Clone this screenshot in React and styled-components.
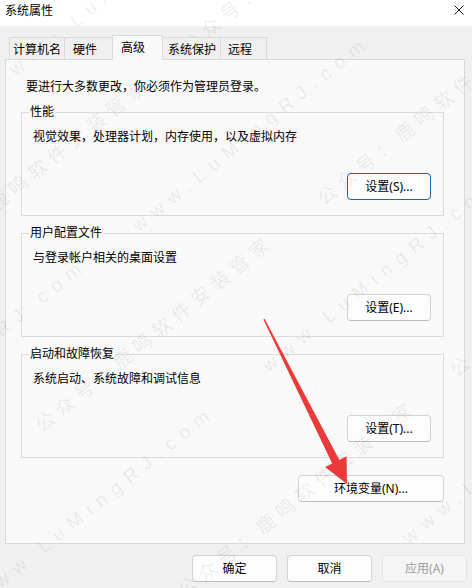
import styled, { createGlobalStyle } from "styled-components";

const GlobalStyle = createGlobalStyle`
  html, body {
    margin: 0;
    padding: 0;
  }
  body {
    background: #f0f0f0;
    font-family: "Noto Sans", "Noto Sans CJK SC", sans-serif;
    font-size: 12px;
    color: #000;
  }
`;

const tabs = [
  { label: "计算机名", width: 56, pad: 3 },
  { label: "硬件", width: 49, pad: 8 },
  { label: "高级", width: 51, pad: 8, active: true },
  { label: "系统保护", width: 59, pad: 5 },
  { label: "远程", width: 47, pad: 7 },
];

const groups = [
  { title: "性能", desc: "视觉效果，处理器计划，内存使用，以及虚拟内存", button: "设置(S)...", focused: true },
  { title: "用户配置文件", desc: "与登录帐户相关的桌面设置", button: "设置(E)..." },
  { title: "启动和故障恢复", desc: "系统启动、系统故障和调试信息", button: "设置(T)..." },
];

const marks = [
  { text: "www.LuMingRJ.com", x: 12, y: 72, latin: true },
  { text: "公众号：鹿鸣软件安装管家", x: 183, y: 48 },
  { text: "公众号：鹿鸣软件安装管家", x: -87, y: 269 },
  { text: "www.LuMingRJ.com", x: 135, y: 228, latin: true },
  { text: "公众号：鹿鸣软件安装管家", x: 319, y: 200 },
  { text: "www.LuMingRJ.com", x: -148, y: 451, latin: true },
  { text: "公众号：鹿鸣软件安装管家", x: 37, y: 427 },
  { text: "www.LuMingRJ.com", x: 265, y: 368, latin: true },
  { text: "公众号：鹿鸣软件安装管家", x: 452, y: 372 },
  { text: "www.LuMingRJ.com", x: -20, y: 598, latin: true },
  { text: "公众号：鹿鸣软件安装管家", x: 180, y: 592 },
  { text: "www.LuMingRJ.com", x: 405, y: 540, latin: true },
];

export default function App() {
  return (
    <>
      <GlobalStyle />
      <Window>
        <TitleBar>
          <Title>系统属性</Title>
          <CloseIcon width="10" height="10" viewBox="0 0 10 10">
            <path d="M0.5 0.5 L9.5 9.5 M9.5 0.5 L0.5 9.5" stroke="#1a1a1a" strokeWidth="1" />
          </CloseIcon>
        </TitleBar>

        <Body>
          <TabRow>
            {tabs.map((t) => (
              <Tab key={t.label} $width={t.width} $pad={t.pad} $active={t.active}>
                {t.label}
              </Tab>
            ))}
          </TabRow>

          <Panel>
            <Intro>要进行大多数更改，你必须作为管理员登录。</Intro>
            {groups.map((g) => (
              <Group key={g.title}>
                <Legend>{g.title}</Legend>
                <Desc>{g.desc}</Desc>
                <GroupButton $focused={g.focused}>{g.button}</GroupButton>
              </Group>
            ))}
            <EnvButton>环境变量(N)...</EnvButton>
          </Panel>

          <Footer>
            <Button>确定</Button>
            <Button>取消</Button>
            <Button disabled>应用(A)</Button>
          </Footer>
        </Body>

        <Watermark>
          {marks.map((m, i) => (
            <Mark key={i} $latin={m.latin} style={{ left: m.x, top: m.y }}>
              {m.text}
            </Mark>
          ))}
        </Watermark>

        <Arrow width="472" height="588" viewBox="0 0 472 588">
          <path
            d="M263.4 319.4 L332.2 463.5 L325.1 467.1 L347 484 L346.5 456.3 L339.4 459.9 L264.6 318.8 Z"
            fill="#ec3a3a"
          />
        </Arrow>
      </Window>
    </>
  );
}

const Window = styled.div`
  position: relative;
  width: 472px;
  height: 588px;
  overflow: hidden;
  background: #f0f0f0;
  display: flex;
  flex-direction: column;
`;

const TitleBar = styled.div`
  height: 26px;
  box-sizing: border-box;
  background: #ffffff;
  display: flex;
  align-items: flex-start;
  justify-content: space-between;
  padding: 3px 8px 0 5px;
`;

const Title = styled.div`
  line-height: 16px;
`;

const CloseIcon = styled.svg`
  margin-top: 2px;
  display: block;
`;

const Body = styled.div`
  padding-top: 9px;
  display: flex;
  flex-direction: column;
`;

const TabRow = styled.div`
  display: flex;
  align-items: flex-end;
  height: 24px;
  padding-left: 9px;
`;

const Tab = styled.div`
  position: relative;
  z-index: ${({ $active }) => ($active ? 2 : 1)};
  box-sizing: border-box;
  width: ${({ $width }) => $width}px;
  height: ${({ $active }) => ($active ? 25 : 22)}px;
  margin-bottom: ${({ $active }) => ($active ? -1 : 0)}px;
  padding-left: ${({ $pad }) => $pad}px;
  padding-top: ${({ $active }) => ($active ? 0 : 2)}px;
  display: flex;
  align-items: center;
  line-height: 16px;
  white-space: nowrap;
  background: ${({ $active }) => ($active ? "#f9f9f9" : "#f0f0f0")};
  border: 1px solid #d9d9d9;
  border-bottom: none;

  & + & {
    margin-left: -1px;
  }
`;

const Panel = styled.div`
  box-sizing: border-box;
  margin-left: 5px;
  width: 460px;
  height: 485px;
  padding: 19px 20px 0 15px;
  background: #f9f9f9;
  border: 1px solid #d9d9d9;
  display: flex;
  flex-direction: column;
  align-items: flex-start;
`;

const Intro = styled.div`
  margin-left: 5px;
  line-height: 16px;
`;

const Group = styled.div`
  position: relative;
  box-sizing: border-box;
  width: 423px;
  margin-top: 17px;
  padding: 16px 12px 15px 11px;
  border: 1px solid #dcdcdc;
  display: flex;
  flex-direction: column;
  align-items: flex-start;

  &:first-of-type {
    margin-top: 21px;
  }
`;

const Legend = styled.div`
  position: absolute;
  top: -9px;
  left: 7px;
  padding: 0 1px;
  line-height: 16px;
  background: #f9f9f9;
`;

const Desc = styled.div`
  line-height: 16px;
`;

const Button = styled.button`
  box-sizing: border-box;
  width: ${({ $width }) => $width || 85}px;
  height: 27px;
  padding: 0;
  font-family: inherit;
  font-size: 12px;
  line-height: 16px;
  color: ${({ disabled }) => (disabled ? "#9e9e9e" : "#000")};
  background: ${({ disabled }) => (disabled ? "#f5f5f5" : "#fdfdfd")};
  border: 1px solid ${({ disabled, $focused }) => (disabled ? "#e3e3e3" : $focused ? "#1f62ab" : "#d3d3d3")};
  border-bottom-color: ${({ disabled, $focused }) => (disabled ? "#e3e3e3" : $focused ? "#1f62ab" : "#bdbdbd")};
  border-radius: 4px;
`;

const GroupButton = styled(Button).attrs({ $width: 84 })`
  align-self: flex-end;
  margin-top: 28px;
`;

const EnvButton = styled(Button).attrs({ $width: 146 })`
  align-self: flex-end;
  margin-top: 17px;
`;

const Footer = styled.div`
  display: flex;
  justify-content: flex-end;
  gap: 10px;
  padding-right: 5px;
  margin-top: 11px;
`;

const Watermark = styled.div`
  position: absolute;
  inset: 0;
  pointer-events: none;
  overflow: hidden;
`;

const Mark = styled.span`
  position: absolute;
  white-space: nowrap;
  transform-origin: 0 50%;
  transform: translateY(-50%) rotate(-39deg);
  font-family: ${({ $latin }) => ($latin ? '"Liberation Sans", sans-serif' : '"Noto Sans CJK SC", sans-serif')};
  font-size: 19px;
  line-height: 22px;
  letter-spacing: ${({ $latin }) => ($latin ? 8 : 6)}px;
  color: rgba(0, 0, 0, 0.08);
`;

const Arrow = styled.svg`
  position: absolute;
  left: 0;
  top: 0;
  pointer-events: none;
`;
